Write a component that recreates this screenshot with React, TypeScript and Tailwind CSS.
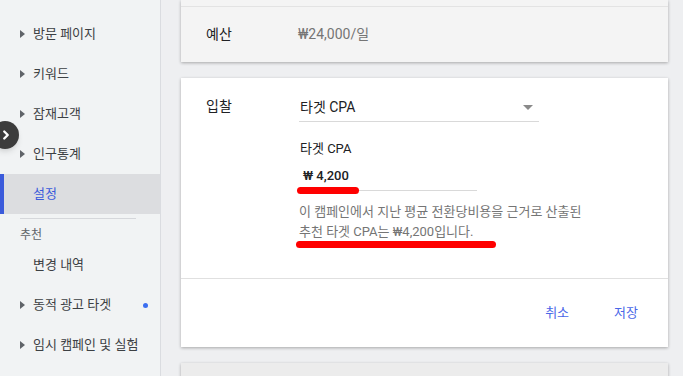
import { ChevronRight } from 'lucide-react';

const font = { fontFamily: 'Roboto, "Noto Sans CJK KR", sans-serif' };

function Caret() {
    return (
        <svg width="5" height="8" viewBox="0 0 5 8" className="shrink-0">
            <path d="M0 0 L5 4 L0 8 Z" fill="#5f6368" />
        </svg>
    );
}

export default function App() {
    const navTop = ['방문 페이지', '키워드', '잠재고객', '인구통계'];

    return (
        <div className="h-[376px] w-[683px] overflow-hidden flex bg-[#eeeff1] relative" style={font}>
            {/* Sidebar */}
            <aside className="w-[161px] shrink-0 bg-[#f1f3f4] border-r border-[#dadce0] flex flex-col pt-[14px] text-[13px] text-[#3c4043]">
                {navTop.map((name) => (
                    <div key={name} className="h-[40px] shrink-0 flex items-center pl-[20px] gap-[8px]">
                        <Caret />
                        <span>{name}</span>
                    </div>
                ))}
                <div className="h-[40px] shrink-0 flex items-center bg-[#dcdde0] border-l-4 border-[#3b5bdb] pl-[29px] text-[#3b5bdb]">
                    설정
                </div>
                <div className="mx-[20px] mt-[4px] border-t border-[#d5d7db] w-[116px]" />
                <div className="pl-[20px] pt-[6px] h-[26px] shrink-0 text-[12px] text-[#5f6368] flex items-center">추천</div>
                <div className="h-[40px] shrink-0 flex items-center pl-[33px]">변경 내역</div>
                <div className="h-[40px] shrink-0 flex items-center pl-[20px] gap-[8px] relative">
                    <Caret />
                    <span>동적 광고 타겟</span>
                    <span className="absolute left-[143px] top-[18px] w-[5px] h-[5px] rounded-full bg-[#3b6ef0]" />
                </div>
                <div className="h-[40px] shrink-0 flex items-center pl-[20px] gap-[8px]">
                    <Caret />
                    <span>임시 캠페인 및 실험</span>
                </div>
            </aside>

            {/* collapse button */}
            <div className="absolute left-[-9px] top-[121px] w-[28px] h-[28px] rounded-full bg-[#3c3c3c] shadow-md flex items-center justify-end pr-[6px]">
                <ChevronRight className="w-[14px] h-[14px] text-white" strokeWidth={4} />
            </div>

            {/* Main */}
            <main className="flex-1 pl-[20px] flex flex-col gap-[16px]">
                <div className="w-[487px] shrink-0 bg-[#f4f4f4] shadow-[0_1px_3px_rgba(0,0,0,0.3)]">
                    <div className="h-[7px] border-b border-[#e3e3e3]" />
                    <div className="h-[55px] flex items-center px-[25px] text-[14px]">
                        <span className="w-[92px] text-[#202124]">예산</span>
                        <span className="text-[#757575]">₩24,000/일</span>
                    </div>
                </div>

                <div className="w-[487px] h-[269px] shrink-0 bg-white shadow-[0_1px_3px_rgba(0,0,0,0.3)] flex flex-col">
                    <div className="flex px-[25px] pt-[16px] h-[200px] shrink-0">
                        <span className="w-[93px] text-[14px] text-[#202124] pt-[2px]">입찰</span>
                        <div className="flex flex-col">
                            <div className="w-[240px] h-[28px] border-b border-[#d9d9d9] flex items-center justify-between pl-[1px] pr-[6px] text-[14px] text-[#202124]">
                                <span>타겟 CPA</span>
                                <svg width="10" height="5" viewBox="0 0 10 5"><path d="M0 0 L10 0 L5 5 Z" fill="#8a8a8a" /></svg>
                            </div>
                            <span className="mt-[17px] text-[13px] text-[#202124] pl-[1px]">타겟 CPA</span>
                            <div className="relative w-[178px] h-[32px] border-b border-[#d9d9d9] flex items-center pl-[4px] pt-[4px] text-[13px] font-medium text-[#202124]">
                                ₩ 4,200
                                <span className="absolute left-[-2px] bottom-[-4px] w-[62px] h-[7px] rounded-full bg-[#ff0000]" />
                            </div>
                            <div className="mt-[11px] text-[13px] leading-[20px] text-[#757575] relative">
                                <div>이 캠페인에서 지난 평균 전환당비용을 근거로 산출된</div>
                                <div>추천 타겟 CPA는 ₩4,200입니다.</div>
                                <span className="absolute left-[-3px] top-[39px] w-[200px] h-[7px] rounded-full bg-[#ff0000]" />
                            </div>
                        </div>
                    </div>
                    <div className="border-t border-[#e0e0e0] flex-1 flex items-center justify-end pr-[30px] gap-[45px] text-[13px] text-[#4a67e8]">
                        <span>취소</span>
                        <span>저장</span>
                    </div>
                </div>

                <div className="w-[487px] h-[40px] shrink-0 bg-[#ececec] shadow-[0_1px_3px_rgba(0,0,0,0.3)]" />
            </main>
        </div>
    );
}
